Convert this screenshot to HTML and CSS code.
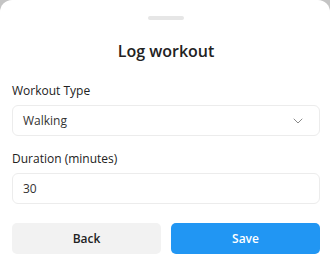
FILE: index.html
```html
<!DOCTYPE html>
<html lang="en">
<head>
    <meta charset="UTF-8">
    <meta name="viewport" content="width=device-width, initial-scale=1.0">
    <title>Log workout</title>
    <link rel="stylesheet" href="styles.css">
</head>
<body>
    <div class="sheet">
        <div class="handle"></div>
        <h1>Log workout</h1>
        <form class="form">
            <label class="label" for="type">Workout Type</label>
            <div class="select" id="type">
                <span>Walking</span>
                <svg class="chevron" width="10" height="6" viewBox="0 0 10 6">
                    <path d="M1 1l4 4 4-4" fill="none" stroke="#8a8a8a" stroke-width="1" stroke-linecap="round" stroke-linejoin="round"/>
                </svg>
            </div>

            <label class="label" for="duration">Duration (minutes)</label>
            <input class="input" type="text" id="duration" value="30">

            <div class="actions">
                <button type="button" class="btn btn-back">Back</button>
                <button type="button" class="btn btn-save">Save</button>
            </div>
        </form>
    </div>
</body>
</html>
```

FILE: styles.css
```css
html, body {
    height: 100%;
    margin: 0;
    padding: 0;
}
body {
    font-family: "Open Sans", "Noto Sans", Arial, sans-serif;
    background-color: #c4c4c4;
    color: #222;
}
.sheet {
    background-color: #fff;
    border-radius: 12px 12px 0 0;
    height: 100%;
    box-sizing: border-box;
    padding: 16px 10px 0 12px;
}
.handle {
    width: 36px;
    height: 4px;
    border-radius: 2px;
    background-color: #e6e6e6;
    margin: 0 auto;
}
h1 {
    text-align: center;
    font-size: 16px;
    font-weight: 600;
    margin: 19px 0 0;
    line-height: 24px;
}
.form {
    margin-top: 20px;
}
.label {
    display: block;
    font-size: 12px;
    line-height: 16px;
    color: #222;
    margin-bottom: 6px;
}
.select, .input {
    width: 100%;
    height: 31px;
    box-sizing: border-box;
    border: 1px solid #ececec;
    border-radius: 6px;
    padding: 0 10px;
    font-family: inherit;
    font-size: 12px;
    color: #333;
    background-color: #fff;
    margin-bottom: 15px;
}
.select {
    display: flex;
    align-items: center;
    justify-content: space-between;
}
.chevron {
    margin-right: 6px;
}
.input {
    display: block;
    outline: none;
    margin-bottom: 19px;
}
.actions {
    display: flex;
    gap: 10px;
}
.btn {
    flex: 1;
    height: 31px;
    border: none;
    border-radius: 5px;
    font-family: inherit;
    font-size: 12px;
    font-weight: 600;
    cursor: pointer;
}
.btn-back {
    background-color: #f2f2f2;
    color: #222;
}
.btn-save {
    background-color: #2196f3;
    color: #fff;
}
```
